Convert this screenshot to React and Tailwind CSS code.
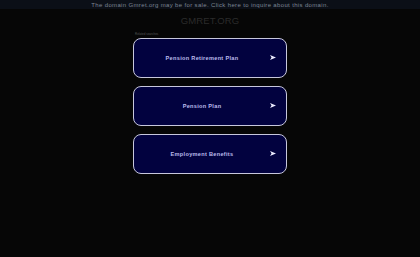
import React from "react";

const items = ["Pension Retirement Plan", "Pension Plan", "Employment Benefits"];

export default function App() {
  return (
    <div className="min-h-[257px] w-full bg-[#060606]" style={{ fontFamily: "Arial, 'Liberation Sans', sans-serif" }}>
      <div className="h-[9px] flex items-center justify-center bg-[#0b0f17] text-[6px] tracking-[0.35px] text-[#7c8593] leading-none">
        The domain Gmret.org may be for sale. Click here to inquire about this domain.
      </div>
      <div className="mt-[7px] text-center text-[9.5px] leading-none tracking-[0.1px] text-[#2b2b2b]">GMRET.ORG</div>
      <div className="mx-auto mt-[7px] w-[154px]">
        <div className="h-[5px] pl-[2px] text-[3px] leading-none text-[#555]">Related searches</div>
        <div className="flex flex-col gap-[8px]">
          {items.map((t) => (
            <div
              key={t}
              className="flex h-[40px] items-center rounded-[8px] border-[1.5px] border-[#c7c7dc] bg-[#02023f] pr-[10px]"
            >
              <span className="flex-1 pt-[1px] text-center text-[5.6px] font-bold tracking-[0.3px] text-[#bcbcec]">{t}</span>
              <svg width="6" height="5" viewBox="0 0 6 5">
                <path d="M0 0 L6 2.5 L0 5 L1.5 2.5 Z" fill="#ececff" />
              </svg>
            </div>
          ))}
        </div>
      </div>
    </div>
  );
}
